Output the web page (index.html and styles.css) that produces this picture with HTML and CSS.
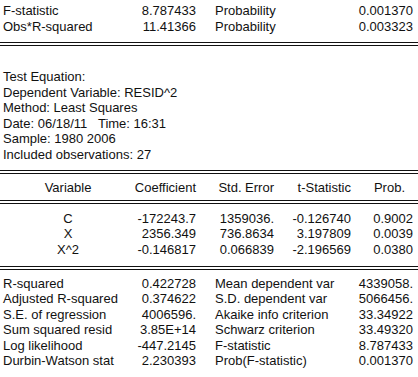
FILE: index.html
```html
<!DOCTYPE html>
<html>
<head>
<meta charset="utf-8">
<link rel="stylesheet" href="styles.css">
</head>
<body>
<div class="out">
  <div class="pairs top">
    <div class="row"><span>F-statistic</span><span class="num">8.787433</span><span></span><span>Probability</span><span class="num">0.001370</span></div>
    <div class="row"><span>Obs*R-squared</span><span class="num">11.41366</span><span></span><span>Probability</span><span class="num">0.003323</span></div>
  </div>
  <div class="dbl d1"></div>
  <div class="info">
    <div class="line">Test Equation:</div>
    <div class="line">Dependent Variable: RESID^2</div>
    <div class="line">Method: Least Squares</div>
    <div class="line">Date: 06/18/11&nbsp;&nbsp; Time: 16:31</div>
    <div class="line">Sample: 1980 2006</div>
    <div class="line">Included observations: 27</div>
  </div>
  <div class="dbl d2"></div>
  <div class="coef head">
    <span class="var">Variable</span><span class="num">Coefficient</span><span class="num">Std. Error</span><span class="num">t-Statistic</span><span class="num prob">Prob.</span>
  </div>
  <div class="dbl d3"></div>
  <div class="coefs">
    <div class="coef"><span class="var">C</span><span class="num">-172243.7</span><span class="num">1359036.</span><span class="num">-0.126740</span><span class="num">0.9002</span></div>
    <div class="coef"><span class="var">X</span><span class="num">2356.349</span><span class="num">736.8634</span><span class="num">3.197809</span><span class="num">0.0039</span></div>
    <div class="coef"><span class="var">X^2</span><span class="num">-0.146817</span><span class="num">0.066839</span><span class="num">-2.196569</span><span class="num">0.0380</span></div>
  </div>
  <div class="dbl d4"></div>
  <div class="pairs stats">
    <div class="row"><span>R-squared</span><span class="num">0.422728</span><span></span><span>Mean dependent var</span><span class="num">4339058.</span></div>
    <div class="row"><span>Adjusted R-squared</span><span class="num">0.374622</span><span></span><span>S.D. dependent var</span><span class="num">5066456.</span></div>
    <div class="row"><span>S.E. of regression</span><span class="num">4006596.</span><span></span><span>Akaike info criterion</span><span class="num">33.34922</span></div>
    <div class="row"><span>Sum squared resid</span><span class="num">3.85E+14</span><span></span><span>Schwarz criterion</span><span class="num">33.49320</span></div>
    <div class="row"><span>Log likelihood</span><span class="num">-447.2145</span><span></span><span>F-statistic</span><span class="num">8.787433</span></div>
    <div class="row"><span>Durbin-Watson stat</span><span class="num">2.230393</span><span></span><span>Prob(F-statistic)</span><span class="num">0.001370</span></div>
  </div>
</div>
</body>
</html>
```
FILE: styles.css
```css
html, body {
  margin: 0;
  padding: 0;
  background: #ffffff;
}
.out {
  width: 418px;
  height: 377px;
  overflow: hidden;
  font-family: "Liberation Sans", Arial, sans-serif;
  font-size: 13px;
  color: #111111;
  padding-top: 3px;
  box-sizing: border-box;
}
.row, .line, .coef {
  height: 15.5px;
  line-height: 15.5px;
  white-space: nowrap;
}
.row {
  display: grid;
  grid-template-columns: 100px 93px 19px 110px 88px;
  padding-left: 3px;
}
.num {
  text-align: right;
}
.line {
  padding-left: 3px;
}
.dbl {
  height: 2px;
  border-top: 1px solid #111111;
  border-bottom: 1px solid #111111;
}
.d1 { margin-top: 8px; }
.info { margin-top: 23px; }
.d2 { margin-top: 8px; }
.head { margin-top: 6px; }
.d3 { margin-top: 4px; }
.coefs { margin-top: 7px; }
.d4 { margin-top: 8.5px; }
.stats { margin-top: 6px; }
.coef {
  display: grid;
  grid-template-columns: 110px 73px 78px 77px 62px;
  padding-left: 13px;
}
.var {
  text-align: center;
}
.prob {
  padding-right: 8px;
}
```
